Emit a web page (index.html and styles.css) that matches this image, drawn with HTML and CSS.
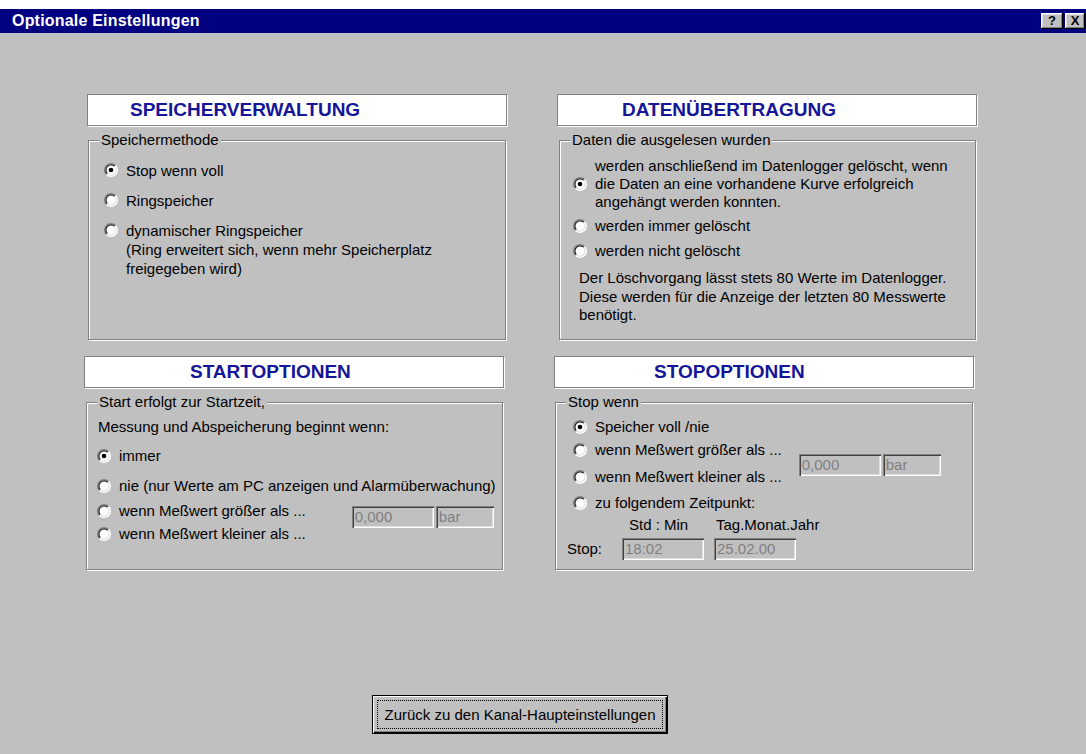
FILE: index.html
```html
<!DOCTYPE html>
<html lang="de">
<head>
<meta charset="utf-8">
<title>Optionale Einstellungen</title>
<link rel="stylesheet" href="styles.css">
</head>
<body>
<svg class="defs" width="0" height="0" aria-hidden="true">
  <defs>
    <g id="radio-ring">
      <circle cx="6" cy="6" r="5.2" fill="#fff"/>
      <path d="M2.11 9.89A5.5 5.5 0 0 1 9.89 2.11" fill="none" stroke="#808080" stroke-width="1.1"/>
      <path d="M2.82 9.18A4.5 4.5 0 0 1 9.18 2.82" fill="none" stroke="#202020" stroke-width="1.1"/>
      <path d="M9.89 2.11A5.5 5.5 0 0 1 2.11 9.89" fill="none" stroke="#fff" stroke-width="1.1"/>
      <path d="M9.18 2.82A4.5 4.5 0 0 1 2.82 9.18" fill="none" stroke="#e4e4e4" stroke-width="1.1"/>
    </g>
  </defs>
</svg>

<div class="window">
  <header class="titlebar">
    <span class="title">Optionale Einstellungen</span>
    <div class="caption-buttons">
      <span class="cap-btn">?</span>
      <span class="cap-btn cap-btn--close">X</span>
    </div>
  </header>

  <main class="client">
    <div class="panels">

      <section class="panel panel--memory">
        <h2 class="panel-head panel-head--memory">SPEICHERVERWALTUNG</h2>
        <fieldset class="group">
          <legend>Speichermethode</legend>
          <div class="group-body group-body--memory">
            <div class="choice"><svg class="radio" viewBox="0 0 12 12"><use href="#radio-ring"/><circle class="dot" cx="6" cy="6" r="2"/></svg><span>Stop wenn voll</span></div>
            <div class="choice"><svg class="radio" viewBox="0 0 12 12"><use href="#radio-ring"/></svg><span>Ringspeicher</span></div>
            <div class="choice"><svg class="radio" viewBox="0 0 12 12"><use href="#radio-ring"/></svg><span>dynamischer Ringspeicher<br>(Ring erweitert sich, wenn mehr Speicherplatz<br>freigegeben wird)</span></div>
          </div>
        </fieldset>
      </section>

      <section class="panel panel--transfer">
        <h2 class="panel-head panel-head--transfer">DATENÜBERTRAGUNG</h2>
        <fieldset class="group">
          <legend>Daten die ausgelesen wurden</legend>
          <div class="group-body group-body--transfer">
            <div class="choice choice--middle"><svg class="radio" viewBox="0 0 12 12"><use href="#radio-ring"/><circle class="dot" cx="6" cy="6" r="2"/></svg><span>werden anschließend im Datenlogger gelöscht, wenn<br>die Daten an eine vorhandene Kurve erfolgreich<br>angehängt werden konnten.</span></div>
            <div class="choice choice--gap6"><svg class="radio" viewBox="0 0 12 12"><use href="#radio-ring"/></svg><span>werden immer gelöscht</span></div>
            <div class="choice choice--gap7"><svg class="radio" viewBox="0 0 12 12"><use href="#radio-ring"/></svg><span>werden nicht gelöscht</span></div>
            <p class="note">Der Löschvorgang lässt stets 80 Werte im Datenlogger.<br>Diese werden für die Anzeige der letzten 80 Messwerte<br>benötigt.</p>
          </div>
        </fieldset>
      </section>

      <section class="panel panel--start">
        <h2 class="panel-head panel-head--start">STARTOPTIONEN</h2>
        <fieldset class="group">
          <legend>Start erfolgt zur Startzeit,</legend>
          <div class="group-body group-body--start">
            <p class="intro">Messung und Abspeicherung beginnt wenn:</p>
            <div class="choice choice--gap11"><svg class="radio" viewBox="0 0 12 12"><use href="#radio-ring"/><circle class="dot" cx="6" cy="6" r="2"/></svg><span>immer</span></div>
            <div class="choice choice--gap12"><svg class="radio" viewBox="0 0 12 12"><use href="#radio-ring"/></svg><span>nie (nur Werte am PC anzeigen und Alarmüberwachung)</span></div>
            <div class="threshold threshold--start">
              <div class="threshold-list">
                <div class="choice"><svg class="radio" viewBox="0 0 12 12"><use href="#radio-ring"/></svg><span>wenn Meßwert größer als ...</span></div>
                <div class="choice"><svg class="radio" viewBox="0 0 12 12"><use href="#radio-ring"/></svg><span>wenn Meßwert kleiner als ...</span></div>
              </div>
              <div class="fields">
                <span class="field field--value">0,000</span>
                <span class="field field--unit">bar</span>
              </div>
            </div>
          </div>
        </fieldset>
      </section>

      <section class="panel panel--stop">
        <h2 class="panel-head panel-head--stop">STOPOPTIONEN</h2>
        <fieldset class="group">
          <legend>Stop wenn</legend>
          <div class="group-body group-body--stop">
            <div class="choice"><svg class="radio" viewBox="0 0 12 12"><use href="#radio-ring"/><circle class="dot" cx="6" cy="6" r="2"/></svg><span>Speicher voll /nie</span></div>
            <div class="threshold threshold--stop">
              <div class="threshold-list">
                <div class="choice"><svg class="radio" viewBox="0 0 12 12"><use href="#radio-ring"/></svg><span>wenn Meßwert größer als ...</span></div>
                <div class="choice"><svg class="radio" viewBox="0 0 12 12"><use href="#radio-ring"/></svg><span>wenn Meßwert kleiner als ...</span></div>
              </div>
              <div class="fields">
                <span class="field field--value">0,000</span>
                <span class="field field--unit">bar</span>
              </div>
            </div>
            <div class="choice choice--gap8"><svg class="radio" viewBox="0 0 12 12"><use href="#radio-ring"/></svg><span>zu folgendem Zeitpunkt:</span></div>
            <div class="stop-time">
              <span></span>
              <span class="col-head col-head--time">Std : Min</span>
              <span class="col-head col-head--date">Tag.Monat.Jahr</span>
              <span class="stop-label">Stop:</span>
              <span class="field field--value">18:02</span>
              <span class="field field--value">25.02.00</span>
            </div>
          </div>
        </fieldset>
      </section>

    </div>

    <div class="footer">
      <button class="btn" type="button"><span class="btn-label">Zurück zu den Kanal-Haupteinstellungen</span></button>
    </div>
  </main>
</div>
</body>
</html>
```

FILE: styles.css
```css
* {
  box-sizing: border-box;
}

html,
body {
  margin: 0;
}

body {
  background: #fff;
  font-family: "Liberation Sans", Arial, sans-serif;
  font-size: 15px;
  color: #000;
}

.defs {
  position: absolute;
  width: 0;
  height: 0;
}

/* window frame */
.window {
  width: 1086px;
  height: 754px;
  padding-top: 9px;
  display: flex;
  flex-direction: column;
  overflow: hidden;
}

.titlebar {
  height: 24px;
  flex: none;
  background: #000080;
  display: flex;
  align-items: center;
  padding: 0 1px 0 12px;
}

.title {
  flex: 1;
  color: #fff;
  font-weight: bold;
  font-size: 16px;
  letter-spacing: 0.2px;
}

.caption-buttons {
  display: flex;
  gap: 2px;
}

.cap-btn {
  width: 22px;
  height: 16px;
  background: #c0c0c0;
  box-shadow: inset -1px -1px #000, inset 1px 1px #fff, inset -2px -2px #808080, inset 2px 2px #dfdfdf;
  font-weight: bold;
  font-size: 13px;
  line-height: 16px;
  text-align: center;
}

.cap-btn--close {
  width: 20px;
}

.client {
  flex: 1;
  background: #c0c0c0;
}

/* four panels in a 2x2 grid */
.panels {
  display: grid;
  grid-template-columns: 424px 424px;
  grid-template-rows: 246px 214px;
  column-gap: 46px;
  row-gap: 16px;
  padding: 61px 0 0 84px;
}

.panel {
  display: flex;
  flex-direction: column;
  gap: 5px;
}

.panel--memory {
  margin-left: 3px;
}

.panel--transfer {
  margin-left: 3px;
}

.panel-head {
  margin: 0;
  width: 420px;
  height: 32px;
  flex: none;
  background: #fff;
  border: 1px solid #808080;
  box-shadow: 1px 1px 0 #fff;
  color: #15159a;
  font-size: 19px;
  font-weight: bold;
  line-height: 30px;
}

.panel-head--memory { padding-left: 42px; }
.panel-head--transfer { padding-left: 64px; }
.panel-head--start { padding-left: 105px; }
.panel-head--stop { padding-left: 99px; }

/* etched group box */
.group {
  flex: 1;
  margin: 0 0 0 1px;
  padding: 0;
  min-width: 0;
  width: 418px;
  border: 1px solid #808080;
  box-shadow: 1px 1px 0 #fff, inset 1px 1px 0 #fff;
}

.panel--transfer .group,
.panel--start .group {
  margin-left: 2px;
  width: 417px;
}

.group legend {
  margin-left: 10px;
  padding: 0 2px;
  line-height: 18px;
  background: #c0c0c0;
}

.group-body {
  line-height: 18px;
  white-space: nowrap;
}

.group-body--memory {
  padding: 12px 0 0 15px;
  line-height: 19px;
  display: flex;
  flex-direction: column;
  gap: 11px;
}

.group-body--transfer {
  padding: 8px 0 0 13px;
}

.group-body--start {
  padding: 7px 0 0 10px;
}

.group-body--stop {
  padding: 7px 0 0 17px;
}

/* radio choice */
.choice {
  display: flex;
  align-items: flex-start;
  gap: 8px;
}

.radio {
  width: 14px;
  height: 14px;
  flex: none;
  margin-top: 2px;
  overflow: visible;
}

.radio .dot {
  fill: #000;
}

.choice--middle {
  align-items: center;
}

.choice--middle .radio {
  margin-top: 0;
}

.choice--gap6 { margin-top: 6px; }
.choice--gap7 { margin-top: 7px; }
.choice--gap8 { margin-top: 8px; }
.choice--gap11 { margin-top: 11px; }
.choice--gap12 { margin-top: 12px; }

.note {
  margin: 9px 0 0 6px;
  line-height: 18.5px;
}

.intro {
  margin: 0 0 0 1px;
}

/* radio pair with a value/unit field beside it */
.threshold {
  display: flex;
}

.threshold-list {
  display: flex;
  flex-direction: column;
}

.threshold--start {
  margin-top: 7px;
}

.threshold--start .threshold-list {
  gap: 5px;
}

.threshold--start .fields {
  margin: 4px 0 0 46px;
}

.threshold--stop {
  margin-top: 5px;
  align-items: center;
}

.threshold--stop .threshold-list {
  gap: 9px;
}

.threshold--stop .fields {
  margin: 2px 0 0 17px;
}

.fields {
  display: flex;
  gap: 2px;
  align-self: flex-start;
}

.threshold--stop .fields {
  align-self: center;
}

.field {
  display: block;
  height: 22px;
  background: #c0c0c0;
  color: #808080;
  padding-left: 3px;
  line-height: 22px;
  box-shadow: inset 1px 1px #808080, inset 2px 2px #404040, inset -1px -1px #fff, inset -2px -2px #dfdfdf;
}

.field--value {
  width: 82px;
}

.field--unit {
  width: 58px;
}

/* stop time entry */
.stop-time {
  display: grid;
  grid-template-columns: 45px 82px 82px;
  column-gap: 10px;
  row-gap: 4px;
  margin: 4px 0 0 -6px;
  align-items: center;
}

.col-head--time { padding-left: 7px; }
.col-head--date { padding-left: 2px; }

/* bottom button */
.footer {
  padding: 125px 0 0 372px;
}

.btn {
  width: 296px;
  height: 39px;
  padding: 4px;
  margin: 0;
  background: #c0c0c0;
  border: 1px solid #000;
  box-shadow: inset 1px 1px #fff, inset -1px -1px #000, inset -2px -2px #808080;
  font-family: "Liberation Sans", Arial, sans-serif;
  font-size: 15px;
  color: #000;
  display: flex;
}

.btn-label {
  flex: 1;
  border: 1px dotted #000;
  display: flex;
  align-items: center;
  justify-content: center;
}
```
